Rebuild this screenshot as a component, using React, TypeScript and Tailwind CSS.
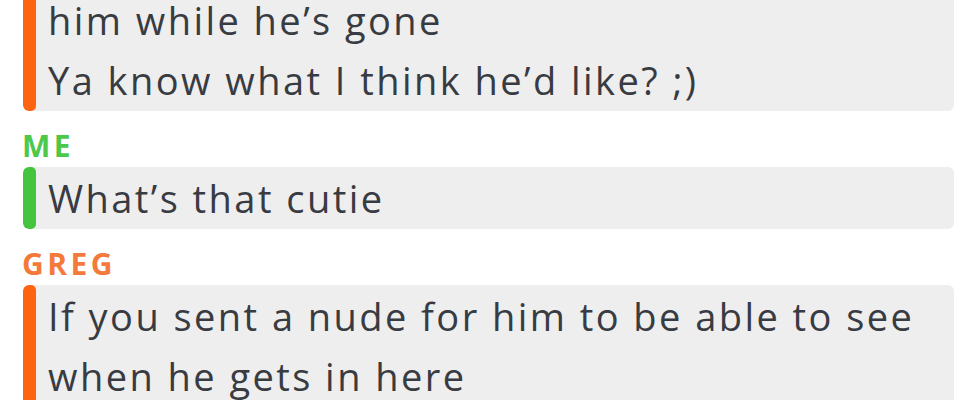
import React from "react";

type Msg = {
  from: "ME" | "GREG";
  lines: string[];
  showLabel?: boolean;
};

const messages: Msg[] = [
  { from: "GREG", lines: ["him while he’s gone", "Ya know what I think he’d like? ;)"] },
  { from: "ME", lines: ["What’s that cutie"], showLabel: true },
  {
    from: "GREG",
    lines: ["If you sent a nude for him to be able to see", "when he gets in here"],
    showLabel: true,
  },
];

const Bubble: React.FC<{ msg: Msg }> = ({ msg }) => {
  const isMe = msg.from === "ME";
  return (
    <div className="flex flex-col">
      {msg.showLabel && (
        <div
          className={
            "mt-[19px] mb-[5px] -ml-px h-[32px] text-[30px] leading-[32px] font-bold tracking-[3.5px] " +
            (isMe ? "text-[#4cc84a]" : "text-[#f47a3c]")
          }
        >
          {msg.from}
        </div>
      )}
      <div className="flex rounded-[6px] bg-[#eeeeee] overflow-hidden">
        <div className={"w-[13px] shrink-0 rounded-[5px] " + (isMe ? "bg-[#45c43f]" : "bg-[#fc6410]")} />
        <div className="py-px pl-[12px] pr-4 text-[38px] leading-[60px] tracking-[2.45px] text-[#383b42] whitespace-nowrap">
          {msg.lines.map((l, i) => (
            <div key={i}>{l}</div>
          ))}
        </div>
      </div>
    </div>
  );
};

export default function App() {
  return (
    <div
      className="w-[978px] h-[400px] overflow-hidden bg-white"
      style={{ fontFamily: "'Open Sans', Lato, sans-serif" }}
    >
      <div className="-mt-[11px] pl-[23px] pr-[24px] flex flex-col">
        {messages.map((m, i) => (
          <Bubble key={i} msg={m} />
        ))}
      </div>
    </div>
  );
}
